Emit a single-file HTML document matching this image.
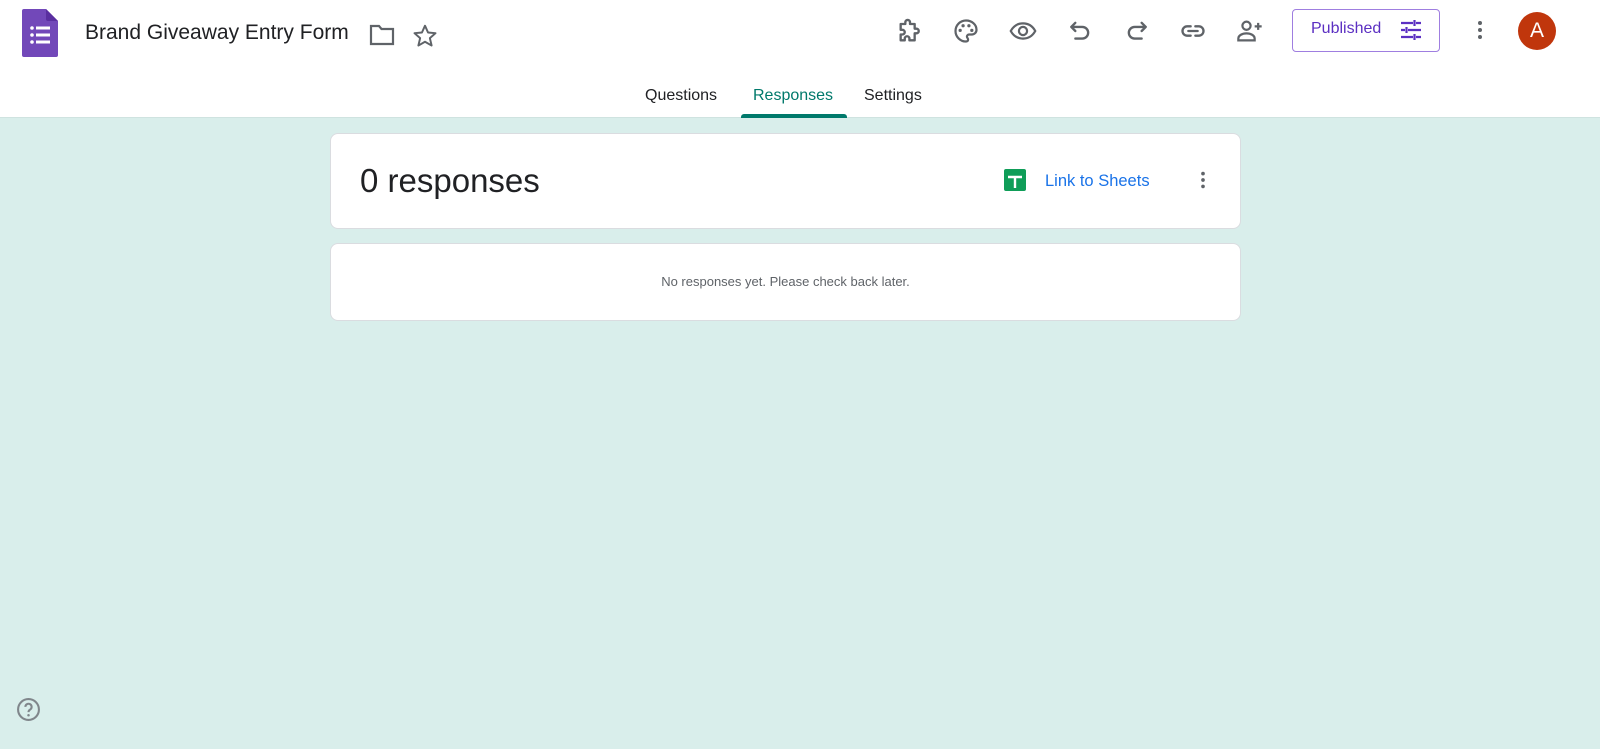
<!DOCTYPE html>
<html><head><meta charset="utf-8"><style>
*{margin:0;padding:0;box-sizing:border-box}
body{width:1600px;height:749px;background:#d9eeeb;font-family:"Liberation Sans",Arial,sans-serif;position:relative;overflow:hidden}
.hdr{position:absolute;left:0;top:0;width:1600px;height:118px;background:#fff;border-bottom:1px solid #cfe3e0}
.abs{position:absolute}
.title{left:85px;top:21px;font-size:21px;color:#202124}
.ic{position:absolute;width:28px;height:28px}
.ic svg{width:28px;height:28px}
.tab{position:absolute;top:87px;font-size:16px;color:#202124}
.card{position:absolute;left:330px;width:911px;background:#fff;border:1px solid #dadce0;border-radius:8px}
</style></head><body>
<div class="hdr">
 <svg class="abs" style="left:22px;top:9px" width="36" height="48" viewBox="0 0 36 48">
  <path d="M2 0h22l12 12v34a2 2 0 0 1-2 2H2a2 2 0 0 1-2-2V2a2 2 0 0 1 2-2z" fill="#7248b9"/>
  <path d="M24 0l12 12H26a2 2 0 0 1-2-2z" fill="#5a2fa0"/>
  <g fill="#fff"><circle cx="10" cy="19" r="1.8"/><circle cx="10" cy="26" r="1.8"/><circle cx="10" cy="33" r="1.8"/>
  <rect x="14" y="17.5" width="14" height="3"/><rect x="14" y="24.5" width="14" height="3"/><rect x="14" y="31.5" width="14" height="3"/></g>
 </svg>
 <div class="abs title">Brand Giveaway Entry Form</div>
 <svg class="abs" style="left:369px;top:24px" width="26" height="22" viewBox="0 0 26 22"><path d="M2 2h8l2.5 3H24v15H2z" fill="none" stroke="#5f6368" stroke-width="2.2"/></svg>
 <svg class="abs" style="left:412px;top:23px" width="26" height="26" viewBox="0 0 24 24"><path d="M12 2.5l2.8 6.3 6.9.6-5.2 4.6 1.6 6.8L12 17.3l-6.1 3.5 1.6-6.8L2.3 9.4l6.9-.6z" fill="none" stroke="#5f6368" stroke-width="1.8" stroke-linejoin="round"/></svg>

 <div class="ic" style="left:896px;top:17px"><svg viewBox="0 0 24 24"><path d="M4 6h4V4.5a2 2 0 0 1 4 0V6h4v4h1.5a2 2 0 0 1 0 4H16v6h-4.5v-1.5a2 2 0 0 0-4 0V20H4v-5h1.5a2 2 0 0 0 0-4H4z" fill="none" stroke="#5f6368" stroke-width="2" stroke-linejoin="round"/></svg></div>
 <div class="ic" style="left:952px;top:17px"><svg viewBox="0 0 24 24"><path d="M12 3a9 9 0 0 0 0 18c1.2 0 1.8-.8 1.8-1.6 0-1.2-1-1.5-1-2.6 0-1 .8-1.8 1.8-1.8H17a4 4 0 0 0 4-4C21 6.5 17 3 12 3z" fill="none" stroke="#5f6368" stroke-width="1.9"/><g fill="#5f6368"><circle cx="7" cy="11.5" r="1.4"/><circle cx="9.5" cy="7.5" r="1.4"/><circle cx="14.5" cy="7.5" r="1.4"/><circle cx="17" cy="11.5" r="1.4"/></g></svg></div>
 <div class="ic" style="left:1009px;top:17px"><svg viewBox="0 0 24 24"><path d="M1.5 12C4 7.5 7.8 5.5 12 5.5s8 2 10.5 6.5C20 16.5 16.2 18.5 12 18.5S4 16.5 1.5 12z" fill="none" stroke="#5f6368" stroke-width="1.9"/><circle cx="12" cy="12" r="3.5" fill="none" stroke="#5f6368" stroke-width="1.9"/></svg></div>
 <div class="ic" style="left:1066px;top:17px"><svg viewBox="0 0 24 24"><path d="M8 5L4.5 8.5 8 12M4.5 8.5H14a5 5 0 0 1 0 10H8" fill="none" stroke="#5f6368" stroke-width="2" stroke-linecap="round" stroke-linejoin="round"/></svg></div>
 <div class="ic" style="left:1123px;top:17px"><svg viewBox="0 0 24 24"><path d="M16 5l3.5 3.5L16 12M19.5 8.5H10a5 5 0 0 0 0 10h6" fill="none" stroke="#5f6368" stroke-width="2" stroke-linecap="round" stroke-linejoin="round"/></svg></div>
 <div class="ic" style="left:1179px;top:17px"><svg viewBox="0 0 24 24"><path d="M10 8H7a4 4 0 0 0 0 8h3M14 8h3a4 4 0 0 1 0 8h-3M8 12h8" fill="none" stroke="#5f6368" stroke-width="2" stroke-linecap="round"/></svg></div>
 <div class="ic" style="left:1236px;top:17px"><svg viewBox="0 0 24 24"><circle cx="9" cy="7.5" r="3.5" fill="none" stroke="#5f6368" stroke-width="1.9"/><path d="M2 20v-1.5c0-2.8 3.5-4.5 7-4.5s7 1.7 7 4.5V20z" fill="none" stroke="#5f6368" stroke-width="1.9"/><path d="M19 5v6M16 8h6" stroke="#5f6368" stroke-width="1.9"/></svg></div>

 <div class="abs" style="left:1292px;top:9px;width:148px;height:43px;border:1px solid #9f7ee0;border-radius:4px"></div>
 <div class="abs" style="left:1311px;top:20px;font-size:16px;color:#5b2fc2">Published</div>
 <svg class="abs" style="left:1399px;top:18px" width="24" height="24" viewBox="0 0 24 24"><g stroke="#5b2fc2" stroke-width="2.2"><path d="M2 5h12M17 5h5M15.5 2v6M2 12h4M9 12h13M7.5 9v6M2 19h12M17 19h5M15.5 16v6"/></g></svg>

 <svg class="abs" style="left:1468px;top:18px" width="24" height="24" viewBox="0 0 24 24"><g fill="#5f6368"><circle cx="12" cy="5" r="2"/><circle cx="12" cy="12" r="2"/><circle cx="12" cy="19" r="2"/></g></svg>
 <div class="abs" style="left:1518px;top:12px;width:38px;height:38px;border-radius:50%;background:#c0360c;color:#fff;font-size:21px;text-align:center;line-height:38px">A</div>

 <div class="tab" style="left:645px">Questions</div>
 <div class="tab" style="left:753px;color:#00796b">Responses</div>
 <div class="tab" style="left:864px">Settings</div>
 <div class="abs" style="left:741px;top:114px;width:106px;height:4px;background:#00796b;border-radius:3px 3px 0 0"></div>
</div>

<div class="card" style="top:133px;height:96px">
 <div class="abs" style="left:29px;top:28px;font-size:33px;color:#202124">0 responses</div>
 <svg class="abs" style="left:673px;top:35px" width="22" height="22" viewBox="0 0 22 22"><rect width="22" height="22" rx="2" fill="#0f9d58"/><path d="M4 8h14M11 8v11" stroke="#fff" stroke-width="2.4"/></svg>
 <div class="abs" style="left:714px;top:38px;font-size:16.5px;color:#1a73e8">Link to Sheets</div>
 <svg class="abs" style="left:861px;top:35px" width="22" height="22" viewBox="0 0 24 24"><g fill="#5f6368"><circle cx="12" cy="5" r="2"/><circle cx="12" cy="12" r="2"/><circle cx="12" cy="19" r="2"/></g></svg>
</div>
<div class="card" style="top:243px;height:78px">
 <div style="text-align:center;margin-top:30px;font-size:13px;color:#5f6368">No responses yet. Please check back later.</div>
</div>

<svg class="abs" style="left:16px;top:697px" width="25" height="25" viewBox="0 0 24 24"><circle cx="12" cy="12" r="10" fill="none" stroke="#80868b" stroke-width="2"/><path d="M9 9.5a3 3 0 1 1 4.5 2.6c-1 .6-1.5 1.2-1.5 2.4" fill="none" stroke="#80868b" stroke-width="2"/><circle cx="12" cy="17.5" r="1.2" fill="#80868b"/></svg>
</body></html>
